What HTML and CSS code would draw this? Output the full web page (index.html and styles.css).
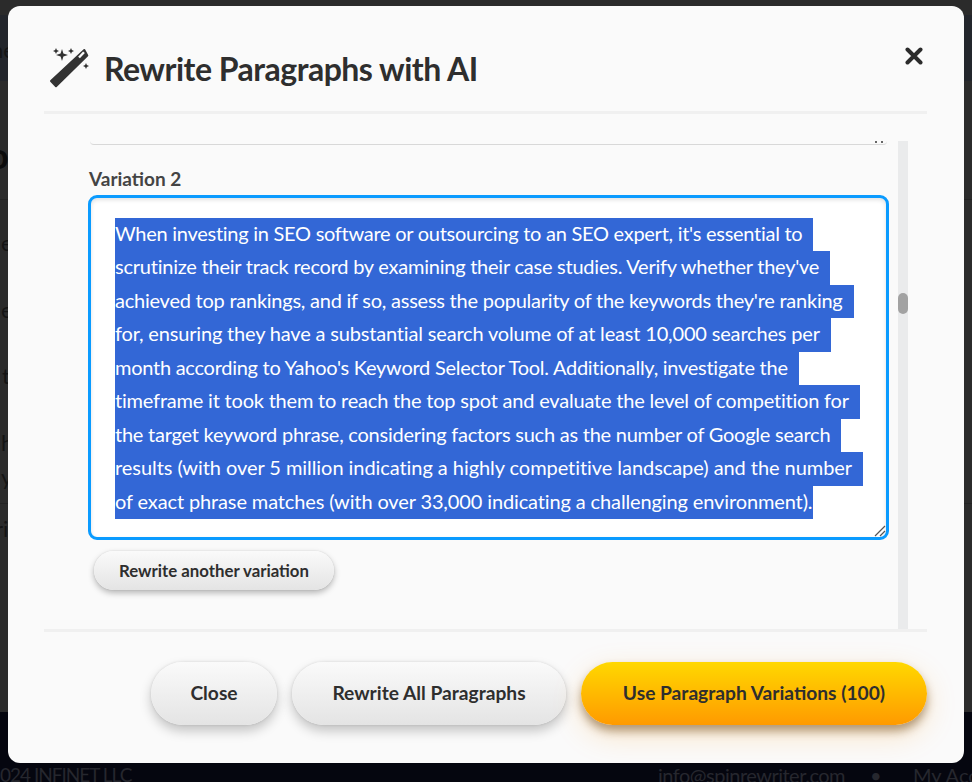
FILE: index.html
```html
<!DOCTYPE html>
<html lang="en">
<head>
<meta charset="utf-8">
<title>Rewrite Paragraphs with AI</title>
<link rel="stylesheet" href="styles.css">
</head>
<body>
<div class="backdrop">
  <div class="bg-band"></div>
  <div class="bg-rule r1"></div>
  <div class="bg-rule r2"></div>
  <div class="bg-frag f1">ne</div>
  <div class="bg-frag f2">o</div>
  <div class="bg-frag f3">e</div>
  <div class="bg-frag f4">e</div>
  <div class="bg-frag f5">t</div>
  <div class="bg-frag f6">h</div>
  <div class="bg-frag f7">y</div>
  <div class="bg-frag f8">ri</div>
  <footer class="bg-footer">
    <span class="copy">024 INFINET LLC</span>
    <span class="mail">info@spinrewriter.com</span>
    <span class="dot">•</span>
    <span class="acct">My Account</span>
  </footer>
</div>
<main class="modal">
  <header class="head">
    <svg class="wand" viewBox="0 0 40 40" width="40" height="40" aria-hidden="true">
      <path d="M35.300 2l3 5.500L7 38.300 2 33z" fill="#333" stroke="#333" stroke-width="2" stroke-linejoin="round"/>
      <path d="M30 9.500l5-5.300" stroke="#fafafa" stroke-width="2.400" fill="none"/>
      <path d="M13 1l1.400 4.600L19 7l-4.600 1.400L13 13l-1.400-4.600L7 7l4.600-1.400z" fill="#333"/>
      <path d="M7 0l.9 2.100 2.100.9-2.100.9L7 6l-.9-2.100L4 3l2.100-.9z" fill="#333"/>
      <path d="M22 0l.9 2.100 2.100.9-2.100.9L22 6l-.9-2.100L19 3l2.100-.9z" fill="#333"/>
      <path d="M37 15l.9 2.100 2.100.9-2.100.9L37 21l-.9-2.100L34 18l2.100-.9z" fill="#333"/>
    </svg>
    <h1 class="title">Rewrite Paragraphs with AI</h1>
    <svg class="close-x" viewBox="0 0 18 18" width="18" height="18" aria-hidden="true">
      <path d="M2.500 2.500l13 13M15.500 2.500l-13 13" stroke="#2b2b2b" stroke-width="4" stroke-linecap="round" fill="none"/>
    </svg>
  </header>
  <section class="body">
    <div class="scroll">
      <div class="prev-area"><span class="prev-grip"></span></div>
      <label class="var-label">Variation 2</label>
      <div class="textarea">
        <span class="line l1">When investing in SEO software or outsourcing to an SEO expert, it's essential to</span>
        <span class="line l2">scrutinize their track record by examining their case studies. Verify whether they've</span>
        <span class="line l3">achieved top rankings, and if so, assess the popularity of the keywords they're ranking</span>
        <span class="line l4">for, ensuring they have a substantial search volume of at least 10,000 searches per</span>
        <span class="line l5">month according to Yahoo's Keyword Selector Tool. Additionally, investigate the</span>
        <span class="line l6">timeframe it took them to reach the top spot and evaluate the level of competition for</span>
        <span class="line l7">the target keyword phrase, considering factors such as the number of Google search</span>
        <span class="line l8">results (with over 5 million indicating a highly competitive landscape) and the number</span>
        <span class="line l9">of exact phrase matches (with over 33,000 indicating a challenging environment).</span>
        <svg class="grip" viewBox="0 0 12 12" width="12" height="12" aria-hidden="true">
          <path d="M1 11L11 1M6 11l5-5" stroke="#555" stroke-width="1.200" fill="none"/>
        </svg>
      </div>
      <button class="btn small" type="button">Rewrite another variation</button>
    </div>
    <div class="track"><div class="thumb"></div></div>
  </section>
  <footer class="foot">
    <button class="btn large close" type="button">Close</button>
    <button class="btn large all" type="button">Rewrite All Paragraphs</button>
    <button class="btn large primary" type="button">Use Paragraph Variations (100)</button>
  </footer>
</main>
</body>
</html>
```
FILE: styles.css
```css
* { box-sizing: border-box; }
html, body { margin: 0; height: 100%; }
body {
  width: 972px;
  height: 782px;
  overflow: hidden;
  position: relative;
  background: #2b2b2b;
  font-family: "Lato", "Noto Sans", sans-serif;
  color: #333;
}
.backdrop { position: absolute; inset: 0; background: #2b2b2b; overflow: hidden; }
.bg-band { position: absolute; left: 0; right: 0; top: 15px; height: 66px; background: #23262c; }
.bg-rule { position: absolute; left: 0; right: 0; height: 1px; background: #232323; }
.r1 { top: 199px; }
.r2 { top: 503px; }
.bg-frag { position: absolute; left: 0; color: #141414; font-size: 22px; line-height: 24px; }
.f1 { top: 38px; left: -9px; }
.f2 { top: 135px; left: -12px; font-size: 36px; line-height: 40px; font-weight: 700; color: #0c0c0c; }
.f3 { top: 231px; left: 1px; }
.f4 { top: 298px; left: 1px; }
.f5 { top: 364px; left: 2px; }
.f6 { top: 431px; left: 1px; }
.f7 { top: 465px; left: 1px; }
.f8 { top: 517px; left: -5px; }
.bg-footer { position: absolute; left: 0; right: 0; top: 712px; bottom: 0; background: #05060f; color: #26272e; font-size: 20px; }
.bg-footer span { position: absolute; top: 50px; line-height: 26px; white-space: nowrap; }
.copy { left: 0; font-size: 19px; letter-spacing: -1px; }
.mail { left: 658px; letter-spacing: -0.5px; }
.dot { left: 870px; }
.acct { left: 913px; }
.modal {
  position: absolute;
  left: 8px;
  top: 6px;
  width: 956px;
  height: 757px;
  background: #fafafa;
  border-radius: 12px;
  padding: 0 37px 0 36px;
  display: flex;
  flex-direction: column;
}
.head {
  height: 108px;
  flex: none;
  display: flex;
  align-items: center;
  border-bottom: 3px solid #f0f0f0;
  padding: 20px 0 0 5px;
}
.wand { flex: none; margin-right: 15px; margin-top: -1px; }
.title { margin: 0; flex: 1; font-size: 32px; font-weight: 700; color: #2e2e2e; line-height: 40px; letter-spacing: -0.5px; }
.close-x { flex: none; margin: -25px 4px 0 0; }
.body { height: 518px; flex: none; display: flex; padding-top: 27px; border-bottom: 3px solid #f0f0f0; }
.scroll { width: 801px; margin-left: 44px; flex: none; overflow: hidden; margin-right: 9px; }
.prev-area { position: relative; height: 4px; margin: 0 2px; border-bottom: 1px solid #d8d8d8; border-radius: 0 0 8px 8px; }
.prev-grip { position: absolute; right: 4px; top: 0; width: 8px; height: 2px; border-left: 2px solid #666; border-right: 2px solid #666; }
.var-label { display: block; margin: 22px 0 4px 1px; font-size: 19px; font-weight: 700; color: #444; line-height: 24px; }
.textarea {
  position: relative;
  height: 345px;
  background: #fff;
  border: 3px solid #0a9bff;
  border-radius: 9px;
  padding: 20px 20px 0 24px;
  box-shadow: inset 0 2px 4px rgba(0,0,0,.12);
  color: #fff;
  font-size: 20px;
}
.line { display: block; width: fit-content; height: 33.44px; line-height: 31.44px; padding-right: 11px; background: #3367d6; white-space: nowrap; }
.l1 { letter-spacing: -0.27px; }
.l2 { letter-spacing: -0.235px; }
.l3 { letter-spacing: -0.24px; }
.l4 { letter-spacing: -0.17px; }
.l5 { letter-spacing: -0.265px; }
.l6 { letter-spacing: -0.2px; }
.l7 { letter-spacing: -0.24px; }
.l8 { letter-spacing: -0.06px; }
.l9 { letter-spacing: -0.125px; padding-right: 1px; }
.grip { position: absolute; right: 0; bottom: 0; }
.btn {
  border: 0;
  border-radius: 999px;
  font-family: inherit;
  font-weight: 700;
  color: #2e2e2e;
  background: linear-gradient(#fafafa, #e4e4e4);
  box-shadow: 0 3px 6px rgba(0,0,0,.28), 0 0 2px rgba(0,0,0,.12);
}
.small { display: block; margin: 11px 0 0 6px; width: 240px; height: 39px; font-size: 16.800px; padding: 0; }
.track { width: 10px; flex: none; background: #eaebec; position: relative; }
.thumb { position: absolute; left: 0; top: 152px; width: 10px; height: 21px; border-radius: 5px; background: #a2a2a2; }
.foot { flex: 1; display: flex; justify-content: flex-end; gap: 15px; padding-top: 30px; align-items: flex-start; }
.large { height: 63px; font-size: 19.200px; padding: 0 0 2px; box-shadow: 0 6px 12px rgba(0,0,0,.22), 0 0 3px rgba(0,0,0,.12); }
.close { width: 126px; }
.all { width: 274px; }
.primary {
  width: 346px;
  background: linear-gradient(#ffd800, #ff9a00);
  box-shadow: 0 6px 10px rgba(90,50,0,.45), 0 10px 30px rgba(255,150,0,.22);
}
```
